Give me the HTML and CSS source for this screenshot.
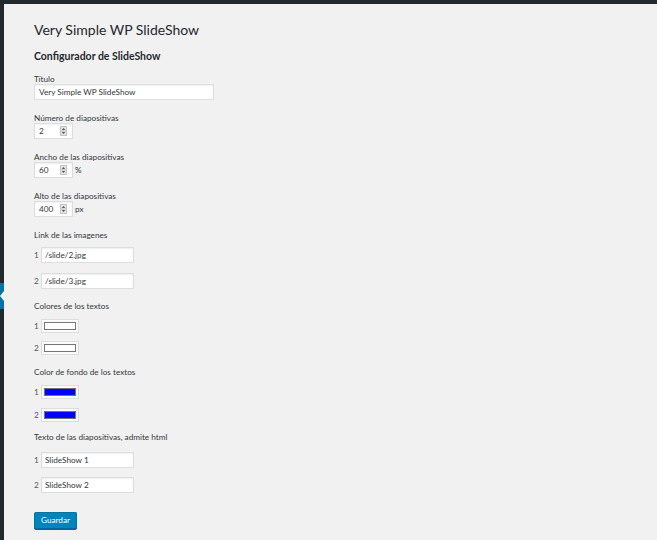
FILE: index.html
```html
<!DOCTYPE html>
<html lang="es">
<head>
<meta charset="utf-8">
<title>Very Simple WP SlideShow</title>
<link rel="stylesheet" href="styles.css">
</head>
<body>
<div class="topbar"></div>
<div class="layout">
  <aside class="sidebar"><span class="menu-current"></span></aside>
  <main class="content">
    <h1 class="page-title">Very Simple WP SlideShow</h1>
    <h2 class="section-title">Configurador de SlideShow</h2>
    <form class="form">
      <div class="field">
        <label class="field-label">Título</label>
        <div class="text-input title-input">Very Simple WP SlideShow</div>
      </div>
      <div class="field">
        <label class="field-label">Número de diapositivas</label>
        <div class="inline">
          <div class="num-input"><span>2</span><svg class="spin" width="7" height="10" viewBox="0 0 7 10"><rect x="0.5" y="0.5" width="6" height="9" fill="#e3e3e3" stroke="#c4c4c4"/><line x1="1" y1="5" x2="6" y2="5" stroke="#c4c4c4"/><path d="M3.5 2 L5.2 4 L1.8 4 Z" fill="#555"/><path d="M3.5 8 L5.2 6 L1.8 6 Z" fill="#555"/></svg></div>
        </div>
      </div>
      <div class="field">
        <label class="field-label">Ancho de las diapositivas</label>
        <div class="inline">
          <div class="num-input"><span>60</span><svg class="spin" width="7" height="10" viewBox="0 0 7 10"><rect x="0.5" y="0.5" width="6" height="9" fill="#e3e3e3" stroke="#c4c4c4"/><line x1="1" y1="5" x2="6" y2="5" stroke="#c4c4c4"/><path d="M3.5 2 L5.2 4 L1.8 4 Z" fill="#555"/><path d="M3.5 8 L5.2 6 L1.8 6 Z" fill="#555"/></svg></div>
          <span class="unit">%</span>
        </div>
      </div>
      <div class="field">
        <label class="field-label">Alto de las diapositivas</label>
        <div class="inline">
          <div class="num-input"><span>400</span><svg class="spin" width="7" height="10" viewBox="0 0 7 10"><rect x="0.5" y="0.5" width="6" height="9" fill="#e3e3e3" stroke="#c4c4c4"/><line x1="1" y1="5" x2="6" y2="5" stroke="#c4c4c4"/><path d="M3.5 2 L5.2 4 L1.8 4 Z" fill="#555"/><path d="M3.5 8 L5.2 6 L1.8 6 Z" fill="#555"/></svg></div>
          <span class="unit">px</span>
        </div>
      </div>

      <div class="group group-links">
        <label class="field-label">Link de las imagenes</label>
        <div class="rows rows-text">
          <div class="row"><span class="idx">1</span><div class="text-input list-input">/slide/2.jpg</div></div>
          <div class="row"><span class="idx">2</span><div class="text-input list-input">/slide/3.jpg</div></div>
        </div>
      </div>

      <div class="group group-colors">
        <label class="field-label">Colores de los textos</label>
        <div class="rows rows-color">
          <div class="row"><span class="idx">1</span><div class="color-box"><span class="swatch swatch-white"></span></div></div>
          <div class="row"><span class="idx">2</span><div class="color-box"><span class="swatch swatch-white"></span></div></div>
        </div>
      </div>

      <div class="group group-bg">
        <label class="field-label">Color de fondo de los textos</label>
        <div class="rows rows-color rows-bg">
          <div class="row"><span class="idx">1</span><div class="color-box"><span class="swatch swatch-blue"></span></div></div>
          <div class="row"><span class="idx">2</span><div class="color-box"><span class="swatch swatch-blue"></span></div></div>
        </div>
      </div>

      <div class="group group-texts">
        <label class="field-label">Texto de las diapositivas, admite html</label>
        <div class="rows rows-text rows-slides">
          <div class="row"><span class="idx">1</span><div class="text-input list-input">SlideShow 1</div></div>
          <div class="row"><span class="idx">2</span><div class="text-input list-input">SlideShow 2</div></div>
        </div>
      </div>

      <div class="actions"><button type="button" class="button">Guardar</button></div>
    </form>
  </main>
</div>
</body>
</html>
```
FILE: styles.css
```css
html, body {
  margin: 0;
  padding: 0;
}
body {
  background: #f1f1f1;
  font-family: Lato, "Liberation Sans", Arial, sans-serif;
  font-size: 8.2px;
  color: #32373c;
  height: 540px;
  overflow: hidden;
}
.topbar {
  height: 4px;
  background: #23282d;
}
.layout {
  display: flex;
  height: 536px;
}
.sidebar {
  width: 4px;
  flex: none;
  background: #23282d;
  display: flex;
  flex-direction: column;
}
.menu-current {
  display: block;
  margin-top: 279px;
  height: 26px;
  background: #0073aa;
  position: relative;
}
.menu-current::after {
  content: "";
  position: absolute;
  right: 0;
  top: 8px;
  border-style: solid;
  border-color: transparent #f1f1f1 transparent transparent;
  border-width: 5px 4px 5px 0;
}
.content {
  flex: 1;
  padding: 15px 0 0 30px;
}
.page-title {
  margin: 0;
  font-size: 14px;
  font-weight: 400;
  line-height: 21px;
  color: #23282d;
}
.section-title {
  margin: 10px 0 0;
  font-size: 10.5px;
  font-weight: 700;
  line-height: 13px;
  color: #23282d;
}
.form {
  margin: 10px 0 0;
  display: flex;
  flex-direction: column;
  align-items: flex-start;
}
.field {
  margin-bottom: 12px;
}
.field-label {
  display: block;
  line-height: 11px;
  padding-top: 1px;
  margin-bottom: -1px;
}
.text-input {
  box-sizing: border-box;
  height: 16px;
  border: 1px solid #ddd;
  background: #fff;
  box-shadow: inset 0 1px 2px rgba(0, 0, 0, 0.07);
  padding: 0 4px;
  line-height: 14px;
  color: #32373c;
  white-space: nowrap;
}
.title-input {
  width: 180px;
}
.inline {
  display: flex;
  align-items: center;
}
.num-input {
  box-sizing: border-box;
  width: 39px;
  height: 16px;
  border: 1px solid #ddd;
  background: #fff;
  box-shadow: inset 0 1px 2px rgba(0, 0, 0, 0.07);
  padding: 0 5px 0 4px;
  display: flex;
  align-items: center;
  justify-content: space-between;
  color: #32373c;
}
.spin {
  display: block;
}
.unit {
  margin-left: 2px;
}
.group {
  margin-bottom: 11px;
}
.group-bg {
  margin-bottom: 9px;
}
.group-texts {
  margin-bottom: 0;
}
.rows {
  display: flex;
  flex-direction: column;
}
.rows-text {
  margin-top: 7px;
  gap: 10px;
}
.rows-slides {
  margin-top: 10px;
  gap: 9px;
}
.rows-color {
  margin-top: 8px;
  gap: 8px;
}
.rows-bg {
  gap: 9px;
}
.row {
  display: flex;
  align-items: center;
}
.idx {
  width: 7px;
  color: #555;
}
.list-input {
  width: 93px;
  padding-left: 3px;
}
.color-box {
  box-sizing: border-box;
  width: 38px;
  height: 14px;
  border: 1px solid #ddd;
  background: #fafafa;
  padding: 2px;
  display: flex;
}
.swatch {
  flex: 1;
  box-sizing: border-box;
  height: 8px;
  border: 1px solid #767676;
}
.swatch-white {
  background: #fff;
}
.swatch-blue {
  background: #0000ff;
}
.actions {
  margin-top: 19px;
  display: flex;
}
.button {
  box-sizing: border-box;
  height: 17px;
  padding: 0 6px;
  margin: 0;
  font-family: inherit;
  font-size: 8.2px;
  line-height: 15px;
  color: #fff;
  background: #0085ba;
  border: 1px solid #0073aa;
  border-bottom-color: #006799;
  border-radius: 2px;
  box-shadow: 0 1px 0 #006799;
  cursor: pointer;
}
```
